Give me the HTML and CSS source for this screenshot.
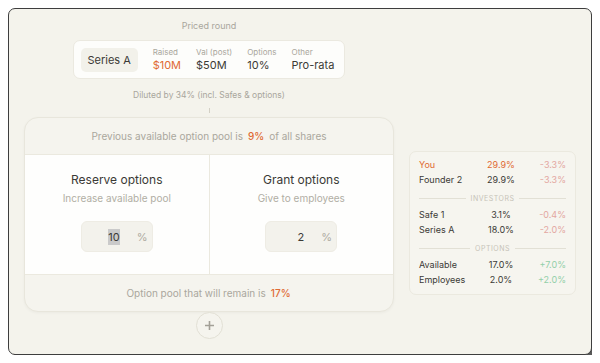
FILE: index.html
```html
<!DOCTYPE html>
<html>
<head>
<meta charset="utf-8">
<link rel="stylesheet" href="styles.css">
</head>
<body>
<div class="window">
  <div class="left">
    <div class="caption">Priced round</div>
    <div class="round">
      <div class="pill">Series A</div>
      <div class="field"><div class="flabel">Raised</div><div class="fval orange">$10M</div></div>
      <div class="field"><div class="flabel">Val (post)</div><div class="fval">$50M</div></div>
      <div class="field"><div class="flabel">Options</div><div class="fval">10%</div></div>
      <div class="field"><div class="flabel">Other</div><div class="fval">Pro-rata</div></div>
    </div>
    <div class="caption diluted">Diluted by 34% (incl. Safes &amp; options)</div>
    <div class="tick"></div>
    <div class="pool">
      <div class="pool-head">Previous available option pool is <b class="orange">9%</b> of all shares</div>
      <div class="panels">
        <div class="panel">
          <div class="ptitle">Reserve options</div>
          <div class="psub">Increase available pool</div>
          <div class="input"><span class="val"><span class="sel">10</span></span><span class="unit">%</span></div>
        </div>
        <div class="panel">
          <div class="ptitle">Grant options</div>
          <div class="psub">Give to employees</div>
          <div class="input"><span class="val">2</span><span class="unit">%</span></div>
        </div>
      </div>
      <div class="pool-foot">Option pool that will remain is <b class="orange">17%</b></div>
    </div>
    <div class="plus">
      <svg width="11" height="11" viewBox="0 0 11 11"><path d="M5.5 1v9M1 5.5h9" stroke="#a3a097" stroke-width="1.6" fill="none"/></svg>
    </div>
  </div>
  <div class="cap">
    <div class="row you"><span>You</span><span class="num">29.9%</span><span class="chg neg">-3.3%</span></div>
    <div class="row"><span>Founder 2</span><span class="num">29.9%</span><span class="chg neg">-3.3%</span></div>
    <div class="sep"><span>INVESTORS</span></div>
    <div class="row"><span>Safe 1</span><span class="num">3.1%</span><span class="chg neg">-0.4%</span></div>
    <div class="row"><span>Series A</span><span class="num">18.0%</span><span class="chg neg">-2.0%</span></div>
    <div class="sep"><span>OPTIONS</span></div>
    <div class="row"><span>Available</span><span class="num">17.0%</span><span class="chg pos">+7.0%</span></div>
    <div class="row"><span>Employees</span><span class="num">2.0%</span><span class="chg pos">+2.0%</span></div>
  </div>
</div>
</body>
</html>
```
FILE: styles.css
```css
* { box-sizing: border-box; }
body {
  margin: 8px;
  background: #ffffff;
  font-family: Inter, "Noto Sans", sans-serif;
  color: #3b3a36;
}
.window {
  width: 584px;
  height: 347px;
  border: 1px solid #3e3e3e;
  border-radius: 7px;
  background: #f4f3ec;
  box-shadow: 6px 6px 0 #585858;
  padding: 11px 15px 0 15px;
  display: flex;
  gap: 15px;
  align-items: flex-start;
}
.left {
  width: 370px;
  display: flex;
  flex-direction: column;
  align-items: center;
}
.caption {
  font-size: 9px;
  line-height: 12px;
  color: #a9a69c;
}
.round {
  margin-top: 8px;
  height: 39px;
  background: #fdfdfb;
  border: 1px solid #ebe9e0;
  border-radius: 7px;
  padding: 0 10px 0 7px;
  display: flex;
  align-items: center;
  gap: 15px;
}
.pill {
  width: 57px;
  height: 24px;
  border-radius: 5px;
  background: #f2f1ea;
  font-size: 11px;
  display: flex;
  align-items: center;
  justify-content: center;
  color: #3b3a36;
}
.flabel {
  font-size: 8px;
  line-height: 11px;
  color: #aaa79d;
}
.fval {
  font-size: 11px;
  line-height: 14px;
  color: #3b3a36;
}
.orange { color: #e06a33 !important; }
b.orange { font-weight: 500; }
.diluted {
  margin-top: 10px;
  font-size: 8.5px;
}
.tick {
  margin-top: 7px;
  width: 1px;
  height: 5px;
  background: #d3d0c5;
}
.pool {
  margin-top: 4px;
  width: 370px;
  border: 1px solid #e8e6dc;
  border-radius: 14px;
  background: #f5f4ee;
  overflow: hidden;
  box-shadow: 0 1px 3px rgba(0,0,0,0.04);
}
.pool-head, .pool-foot {
  height: 36px;
  display: flex;
  align-items: center;
  justify-content: center;
  font-size: 10px;
  color: #aaa79d;
  gap: 4px;
}
.pool-head b, .pool-foot b { margin: 0 1px; }
.panels {
  display: flex;
  background: #fefefd;
  border-top: 1px solid #ebe9df;
  border-bottom: 1px solid #ebe9df;
  height: 121px;
}
.panel {
  flex: 1;
  display: flex;
  flex-direction: column;
  align-items: center;
  padding-top: 17px;
}
.panel + .panel { border-left: 1px solid #ebe9df; }
.ptitle {
  font-size: 12px;
  line-height: 16px;
  color: #3b3a36;
}
.psub {
  margin-top: 3px;
  font-size: 10px;
  line-height: 14px;
  color: #b1aea4;
}
.input {
  margin-top: 16px;
  width: 72px;
  height: 31px;
  background: #f3f2ec;
  border: 1px solid #eeece4;
  border-radius: 6px;
  display: flex;
  align-items: center;
  font-size: 11px;
}
.val {
  width: 38px;
  text-align: right;
  color: #3b3a36;
}
.sel { background: #cacaca; padding: 1px 0; }
.unit {
  margin-left: 17px;
  color: #aeaba1;
}
.plus {
  width: 27px;
  height: 27px;
  border-radius: 50%;
  border: 1px solid #e2e0d5;
  background: #f5f4ee;
  display: flex;
  align-items: center;
  justify-content: center;
}
.cap {
  margin-top: 131px;
  width: 167px;
  background: #f6f5ef;
  border: 1px solid #ebe9df;
  border-radius: 7px;
  padding: 5px 9px 7px 9px;
}
.row {
  display: grid;
  grid-template-columns: 63px 38px 1fr;
  height: 15px;
  align-items: center;
  font-size: 9px;
  color: #3b3a36;
}
.num { text-align: center; }
.chg { text-align: right; }
.neg { color: #e3a7a1; }
.pos { color: #93cfa8; }
.row.you span:nth-child(1), .row.you .num { color: #e06a33; }
.sep {
  margin: 7px 0 5px;
  height: 8px;
  display: flex;
  align-items: center;
  gap: 5px;
  font-size: 7px;
  letter-spacing: 0.5px;
  color: #c6c3b8;
}
.sep::before, .sep::after {
  content: "";
  flex: 1;
  height: 1px;
  background: #e2e0d5;
}
```
